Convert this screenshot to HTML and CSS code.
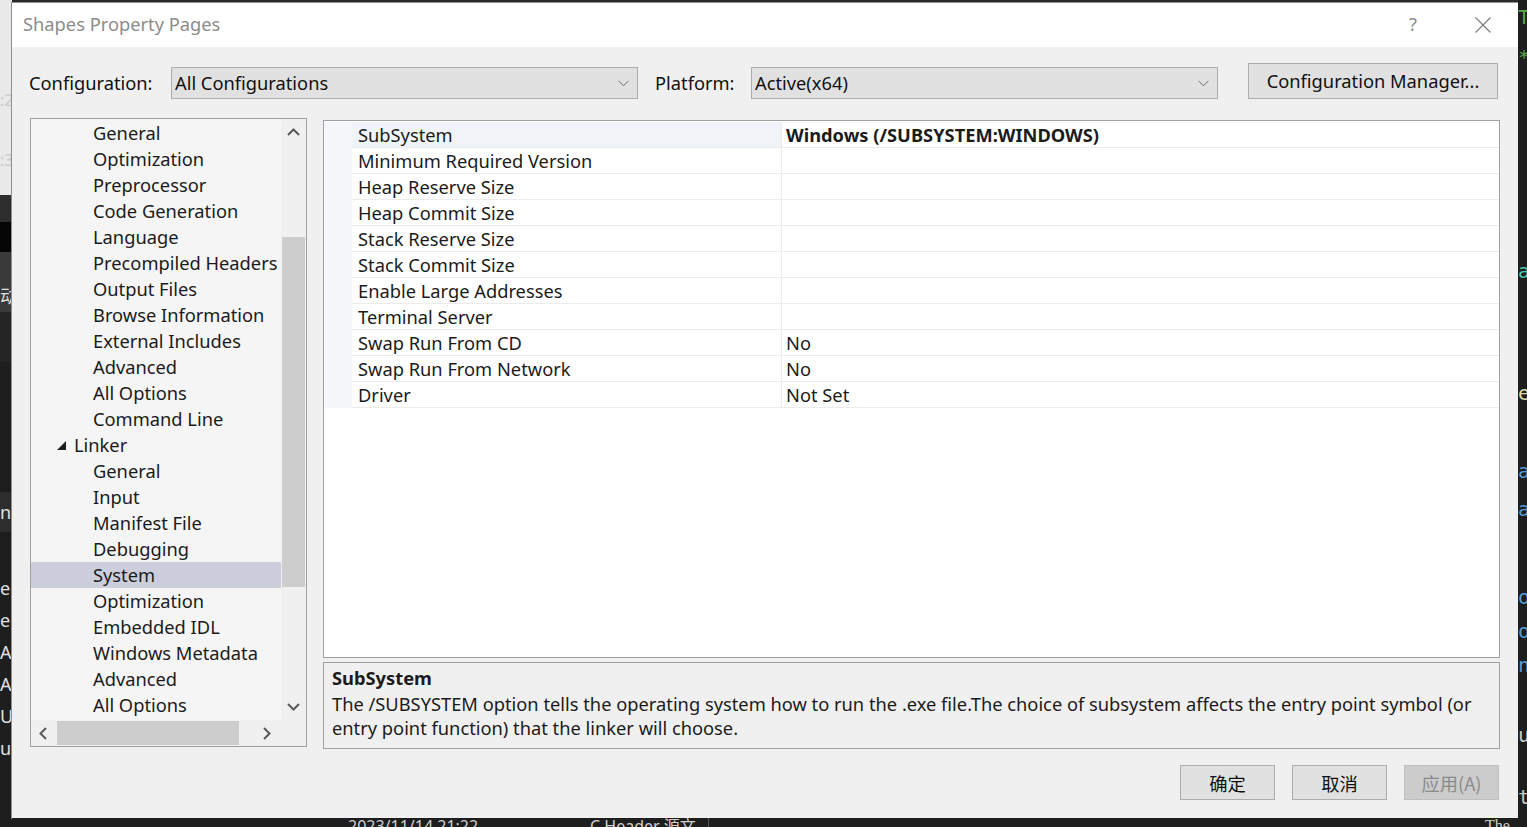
FILE: index.html
```html
<!DOCTYPE html>
<html>
<head>
<meta charset="utf-8">
<link rel="stylesheet" href="styles.css">
</head>
<body>
<div class="screen">
  <div class="strip-left">
    <div class="sl-light"><span class="faint t1">:2</span><span class="faint t2">:3</span></div>
    <div class="sl-a"></div>
    <div class="sl-b"></div>
    <div class="sl-c"><span class="lt">动</span></div>
    <div class="sl-d"></div>
    <div class="sl-e"><span class="lt">nc</span></div>
    <div class="sl-f">
      <span class="lt">er</span><span class="lt">er</span><span class="lt">Ap</span><span class="lt">Ap</span><span class="lt">Ut</span><span class="lt">util.h</span>
    </div>
  </div>
  <div class="strip-top"></div>
  <div class="dialog">
    <div class="titlebar">
      <span class="title">Shapes Property Pages</span>
      <span class="help">?</span>
      <svg class="close" width="16" height="16" viewBox="0 0 16 16"><path d="M0.5 0.5L15.5 15.5M15.5 0.5L0.5 15.5" stroke="#7a7a7a" stroke-width="1.1" fill="none"/></svg>
    </div>
    <div class="body">
      <div class="config-row">
        <span class="lbl lbl-config">Configuration:</span>
        <div class="combo"><span>All Configurations</span><svg width="11" height="7" viewBox="0 0 11 7"><path d="M0.5 0.8L5.5 5.8L10.5 0.8" stroke="#6a6a6a" stroke-width="1" fill="none"/></svg></div>
        <span class="lbl lbl-platform">Platform:</span>
        <div class="combo"><span>Active(x64)</span><svg width="11" height="7" viewBox="0 0 11 7"><path d="M0.5 0.8L5.5 5.8L10.5 0.8" stroke="#6a6a6a" stroke-width="1" fill="none"/></svg></div>
        <button class="btn btn-mgr">Configuration Manager...</button>
      </div>
      <div class="main">
        <div class="tree">
          <div class="tree-top">
            <div class="tree-list">
              <div class="ti">General</div>
              <div class="ti">Optimization</div>
              <div class="ti">Preprocessor</div>
              <div class="ti">Code Generation</div>
              <div class="ti">Language</div>
              <div class="ti">Precompiled Headers</div>
              <div class="ti">Output Files</div>
              <div class="ti">Browse Information</div>
              <div class="ti">External Includes</div>
              <div class="ti">Advanced</div>
              <div class="ti">All Options</div>
              <div class="ti">Command Line</div>
              <div class="ti ti-group"><svg class="tri" width="9" height="9" viewBox="0 0 9 9"><polygon points="9,0 9,9 0,9" fill="#1e1e1e"/></svg>Linker</div>
              <div class="ti">General</div>
              <div class="ti">Input</div>
              <div class="ti">Manifest File</div>
              <div class="ti">Debugging</div>
              <div class="ti ti-sel">System</div>
              <div class="ti">Optimization</div>
              <div class="ti">Embedded IDL</div>
              <div class="ti">Windows Metadata</div>
              <div class="ti">Advanced</div>
              <div class="ti">All Options</div>
            </div>
            <div class="vscroll">
              <svg class="arr" width="13" height="8" viewBox="0 0 13 8"><path d="M1 7L6.5 1.5L12 7" stroke="#5a5a5a" stroke-width="2" fill="none"/></svg>
              <div class="vtrack"><div class="vthumb"></div></div>
              <svg class="arr" width="13" height="8" viewBox="0 0 13 8"><path d="M1 1L6.5 6.5L12 1" stroke="#5a5a5a" stroke-width="2" fill="none"/></svg>
            </div>
          </div>
          <div class="hscroll">
            <svg class="harr" width="8" height="13" viewBox="0 0 8 13"><path d="M7 1L1.5 6.5L7 12" stroke="#5a5a5a" stroke-width="2" fill="none"/></svg>
            <div class="htrack"><div class="hthumb"></div></div>
            <svg class="harr" width="8" height="13" viewBox="0 0 8 13"><path d="M1 1L6.5 6.5L1 12" stroke="#5a5a5a" stroke-width="2" fill="none"/></svg>
            <div class="corner"></div>
          </div>
        </div>
        <div class="right">
          <div class="grid">
            <div class="row row-sel"><div class="gut"></div><div class="name">SubSystem</div><div class="val bold">Windows (/SUBSYSTEM:WINDOWS)</div></div>
            <div class="row"><div class="gut"></div><div class="name">Minimum Required Version</div><div class="val"></div></div>
            <div class="row"><div class="gut"></div><div class="name">Heap Reserve Size</div><div class="val"></div></div>
            <div class="row"><div class="gut"></div><div class="name">Heap Commit Size</div><div class="val"></div></div>
            <div class="row"><div class="gut"></div><div class="name">Stack Reserve Size</div><div class="val"></div></div>
            <div class="row"><div class="gut"></div><div class="name">Stack Commit Size</div><div class="val"></div></div>
            <div class="row"><div class="gut"></div><div class="name">Enable Large Addresses</div><div class="val"></div></div>
            <div class="row"><div class="gut"></div><div class="name">Terminal Server</div><div class="val"></div></div>
            <div class="row"><div class="gut"></div><div class="name">Swap Run From CD</div><div class="val">No</div></div>
            <div class="row"><div class="gut"></div><div class="name">Swap Run From Network</div><div class="val">No</div></div>
            <div class="row"><div class="gut"></div><div class="name">Driver</div><div class="val">Not Set</div></div>
            <div class="grid-rest"><div class="gut"></div></div>
          </div>
          <div class="desc">
            <div class="desc-title">SubSystem</div>
            <div class="desc-text">The /SUBSYSTEM option tells the operating system how to run the .exe file.The choice of subsystem affects the entry point symbol (or entry point function) that the linker will choose.</div>
          </div>
        </div>
      </div>
      <div class="buttons">
        <button class="btn btn-cjk">确定</button>
        <button class="btn btn-cjk">取消</button>
        <button class="btn btn-cjk btn-dis">应用(A)</button>
      </div>
    </div>
  </div>
  <div class="strip-right">
    <span class="c g c1">T</span><span class="c g c2">*</span><span class="c teal c3">a</span><span class="c yel c4">e</span><span class="c blu c5">a</span><span class="c blu c6">a</span><span class="c blu c7">o</span><span class="c blu c8">o</span><span class="c blu c9">n</span><span class="c gr c10">u</span><span class="c gr c11">t</span>
  </div>
  <div class="strip-bottom">
    <span class="bt b1">2023/11/14 21:22</span>
    <span class="bt b2">C Header 源文</span>
    <span class="bline"></span>
    <span class="bt b3">The</span>
  </div>
</div>
</body>
</html>
```
FILE: styles.css
```css
* { box-sizing: border-box; }
html, body { margin: 0; padding: 0; }
body {
  background: #1e1e1e;
  font-family: "Noto Sans", "Noto Sans CJK SC", sans-serif;
  color: #1b1b1b;
  width: 1527px;
  height: 827px;
  overflow: hidden;
}
.screen {
  display: grid;
  grid-template-columns: 12px 1506px 9px;
  grid-template-rows: 3px 815px 9px;
  width: 1527px;
  height: 827px;
}
.strip-left {
  grid-column: 1;
  grid-row: 1 / 4;
  display: flex;
  flex-direction: column;
  overflow: hidden;
  background: #1e1e1e;
}
.sl-light { height: 195px; background: #e9e9e9; display: flex; flex-direction: column; }
.faint { color: #c8c8c8; font-size: 16px; line-height: 16px; }
.t1 { margin-top: 92px; }
.t2 { margin-top: 44px; }
.sl-a { height: 27px; background: #2d2d2d; }
.sl-b { height: 30px; background: #050505; }
.sl-c { height: 60px; background: #3a3a3a; display: flex; align-items: flex-end; }
.sl-d { height: 50px; background: #252526; }
.sl-e { height: 40px; background: #2d2d2d; display: flex; align-items: center; margin-top: 130px; }
.lt { color: #e0e0e0; font-size: 18px; line-height: 32px; white-space: nowrap; }
.sl-f { display: flex; flex-direction: column; margin-top: 40px; }
.strip-top { grid-column: 2; grid-row: 1; background: #2a2a2a; }
.strip-right {
  grid-column: 3;
  grid-row: 1 / 4;
  background: #1e1e1e;
  display: flex;
  flex-direction: column;
  overflow: hidden;
  font-family: "DejaVu Sans Mono", monospace;
  font-size: 20px;
  line-height: 22px;
}
.c { display: block; height: 22px; }
.g { color: #57a64a; }
.teal { color: #4ec9b0; }
.yel { color: #dcdcaa; }
.blu { color: #569cd6; }
.gr { color: #c8c8c8; }
.c1 { margin-top: 6px; }
.c2 { margin-top: 18px; }
.c3 { margin-top: 192px; }
.c4 { margin-top: 100px; }
.c5 { margin-top: 56px; }
.c6 { margin-top: 16px; }
.c7 { margin-top: 66px; }
.c8 { margin-top: 12px; }
.c9 { margin-top: 12px; }
.c10 { margin-top: 48px; }
.c11 { margin-top: 40px; }
.strip-bottom {
  grid-column: 2;
  grid-row: 3;
  background: #1e1e1e;
  position: relative;
  overflow: hidden;
  color: #d0d0d0;
  font-size: 16px;
}
.bt { position: absolute; top: 0; line-height: 16px; white-space: nowrap; }
.b1 { left: 336px; }
.b2 { left: 578px; }
.b3 { left: 1473px; font-family: "Liberation Serif", serif; }
.bline { position: absolute; left: 696px; top: 0; width: 1px; height: 9px; background: #555; }

.dialog {
  grid-column: 2;
  grid-row: 2;
  background: #f0f0f0;
  display: flex;
  flex-direction: column;
  box-shadow: 0 0 0 1px #8f8f8f;
  font-size: 18.3px;
}
.titlebar {
  height: 44px;
  background: #ffffff;
  display: flex;
  align-items: center;
  padding-left: 11px;
  padding-bottom: 3px;
}
.title { color: #8c8c8c; font-size: 18.3px; flex: 1; }
.help { color: #8c8c8c; font-size: 18.3px; margin-right: 58px; }
.close { margin-right: 27px; margin-top: 2px; }
.body {
  flex: 1;
  display: flex;
  flex-direction: column;
  padding: 16px 18px 18px 18px;
}
.config-row {
  display: flex;
  align-items: flex-end;
  height: 36px;
}
.lbl { font-size: 18.3px; color: #111; line-height: 32px; height: 32px; }
.lbl-config { width: 142px; margin-left: -1px; }
.lbl-platform { width: 96px; margin-left: 17px; }
.combo {
  width: 467px;
  height: 32px;
  background: #e1e1e1;
  border: 1px solid #adadad;
  display: flex;
  align-items: center;
  justify-content: space-between;
  padding: 0 7px 1px 3px;
  font-size: 18.3px;
  color: #111;
}
.combo svg { margin-right: 1px; margin-top: 1px; }
.btn {
  font-family: "Noto Sans", "Noto Sans CJK SC", sans-serif;
  background: #e1e1e1;
  border: 1px solid #adadad;
  color: #111;
  font-size: 18.3px;
  padding: 0;
}
.btn-mgr { width: 250px; height: 36px; margin-left: 30px; padding-bottom: 2px; }
.main {
  display: flex;
  margin-top: 19px;
  height: 631px;
  gap: 16px;
}
.tree {
  width: 277px;
  height: 629px;
  border: 1px solid #a0a0a0;
  background: #f5f5f5;
  display: flex;
  flex-direction: column;
}
.tree-top { display: flex; height: 601px; }
.tree-list {
  width: 250px;
  overflow: hidden;
  padding-top: 1px;
}
.ti {
  height: 26px;
  line-height: 26px;
  padding-left: 62px;
  font-size: 18.3px;
  white-space: nowrap;
  display: flex;
  align-items: center;
}
.ti-group { padding-left: 26px; }
.tri { margin-right: 8px; margin-top: 1px; }
.ti-sel { background: #cccedb; }
.vscroll {
  width: 25px;
  display: flex;
  flex-direction: column;
  align-items: center;
  background: #f0f0f0;
}
.arr { flex: none; margin: 9px 0; }
.vtrack { flex: 1; width: 100%; padding: 0 1px; }
.vthumb { margin-top: 92px; height: 350px; background: #cdcdcd; }
.hscroll {
  height: 26px;
  display: flex;
  align-items: center;
  background: #f0f0f0;
}
.harr { flex: none; margin: 0 8px; }
.htrack { width: 202px; height: 100%; padding: 1px 0; }
.hthumb { margin-left: 2px; width: 182px; height: 100%; background: #cdcdcd; }
.htrack + .harr { margin-left: 6px; }
.corner { width: 25px; height: 100%; margin-left: auto; background: #f0f0f0; }
.right {
  flex: 1;
  display: flex;
  flex-direction: column;
  margin-top: 2px;
  gap: 4px;
}
.grid {
  height: 538px;
  border: 1px solid #a0a0a0;
  background: #ffffff;
  display: flex;
  flex-direction: column;
  padding-top: 1px;
}
.row {
  display: flex;
  height: 26px;
  font-size: 18.3px;
}
.gut { width: 28px; background: #f5f7fa; flex: none; }
.name {
  width: 430px;
  padding-left: 6px;
  padding-top: 1px;
  line-height: 24px;
  border-bottom: 1px solid #ececec;
  border-right: 1px solid #ececec;
  white-space: nowrap;
}
.val {
  flex: 1;
  padding-left: 4px;
  padding-top: 1px;
  line-height: 24px;
  border-bottom: 1px solid #ececec;
  white-space: nowrap;
}
.row-sel .name { background: #f0f3f8; }
.bold { font-weight: 700; }
.grid-rest { flex: 1; display: flex; }
.grid-rest .gut { background: #ffffff; }
.desc {
  height: 87px;
  border: 1px solid #a0a0a0;
  background: #f0f0f0;
  padding: 3px 8px 0 8px;
  font-size: 18.3px;
}
.desc-title { font-weight: 700; line-height: 24px; }
.desc-text { line-height: 24px; margin-top: 2px; }
.buttons {
  display: flex;
  justify-content: flex-end;
  gap: 17px;
  margin-top: 16px;
  padding-right: 1px;
}
.btn-cjk { width: 95px; height: 35px; font-family: "Noto Sans CJK SC", sans-serif; font-size: 18.3px; }
.btn-dis { background: #cccccc; border-color: #bfbfbf; color: #8a8a8a; }
```
